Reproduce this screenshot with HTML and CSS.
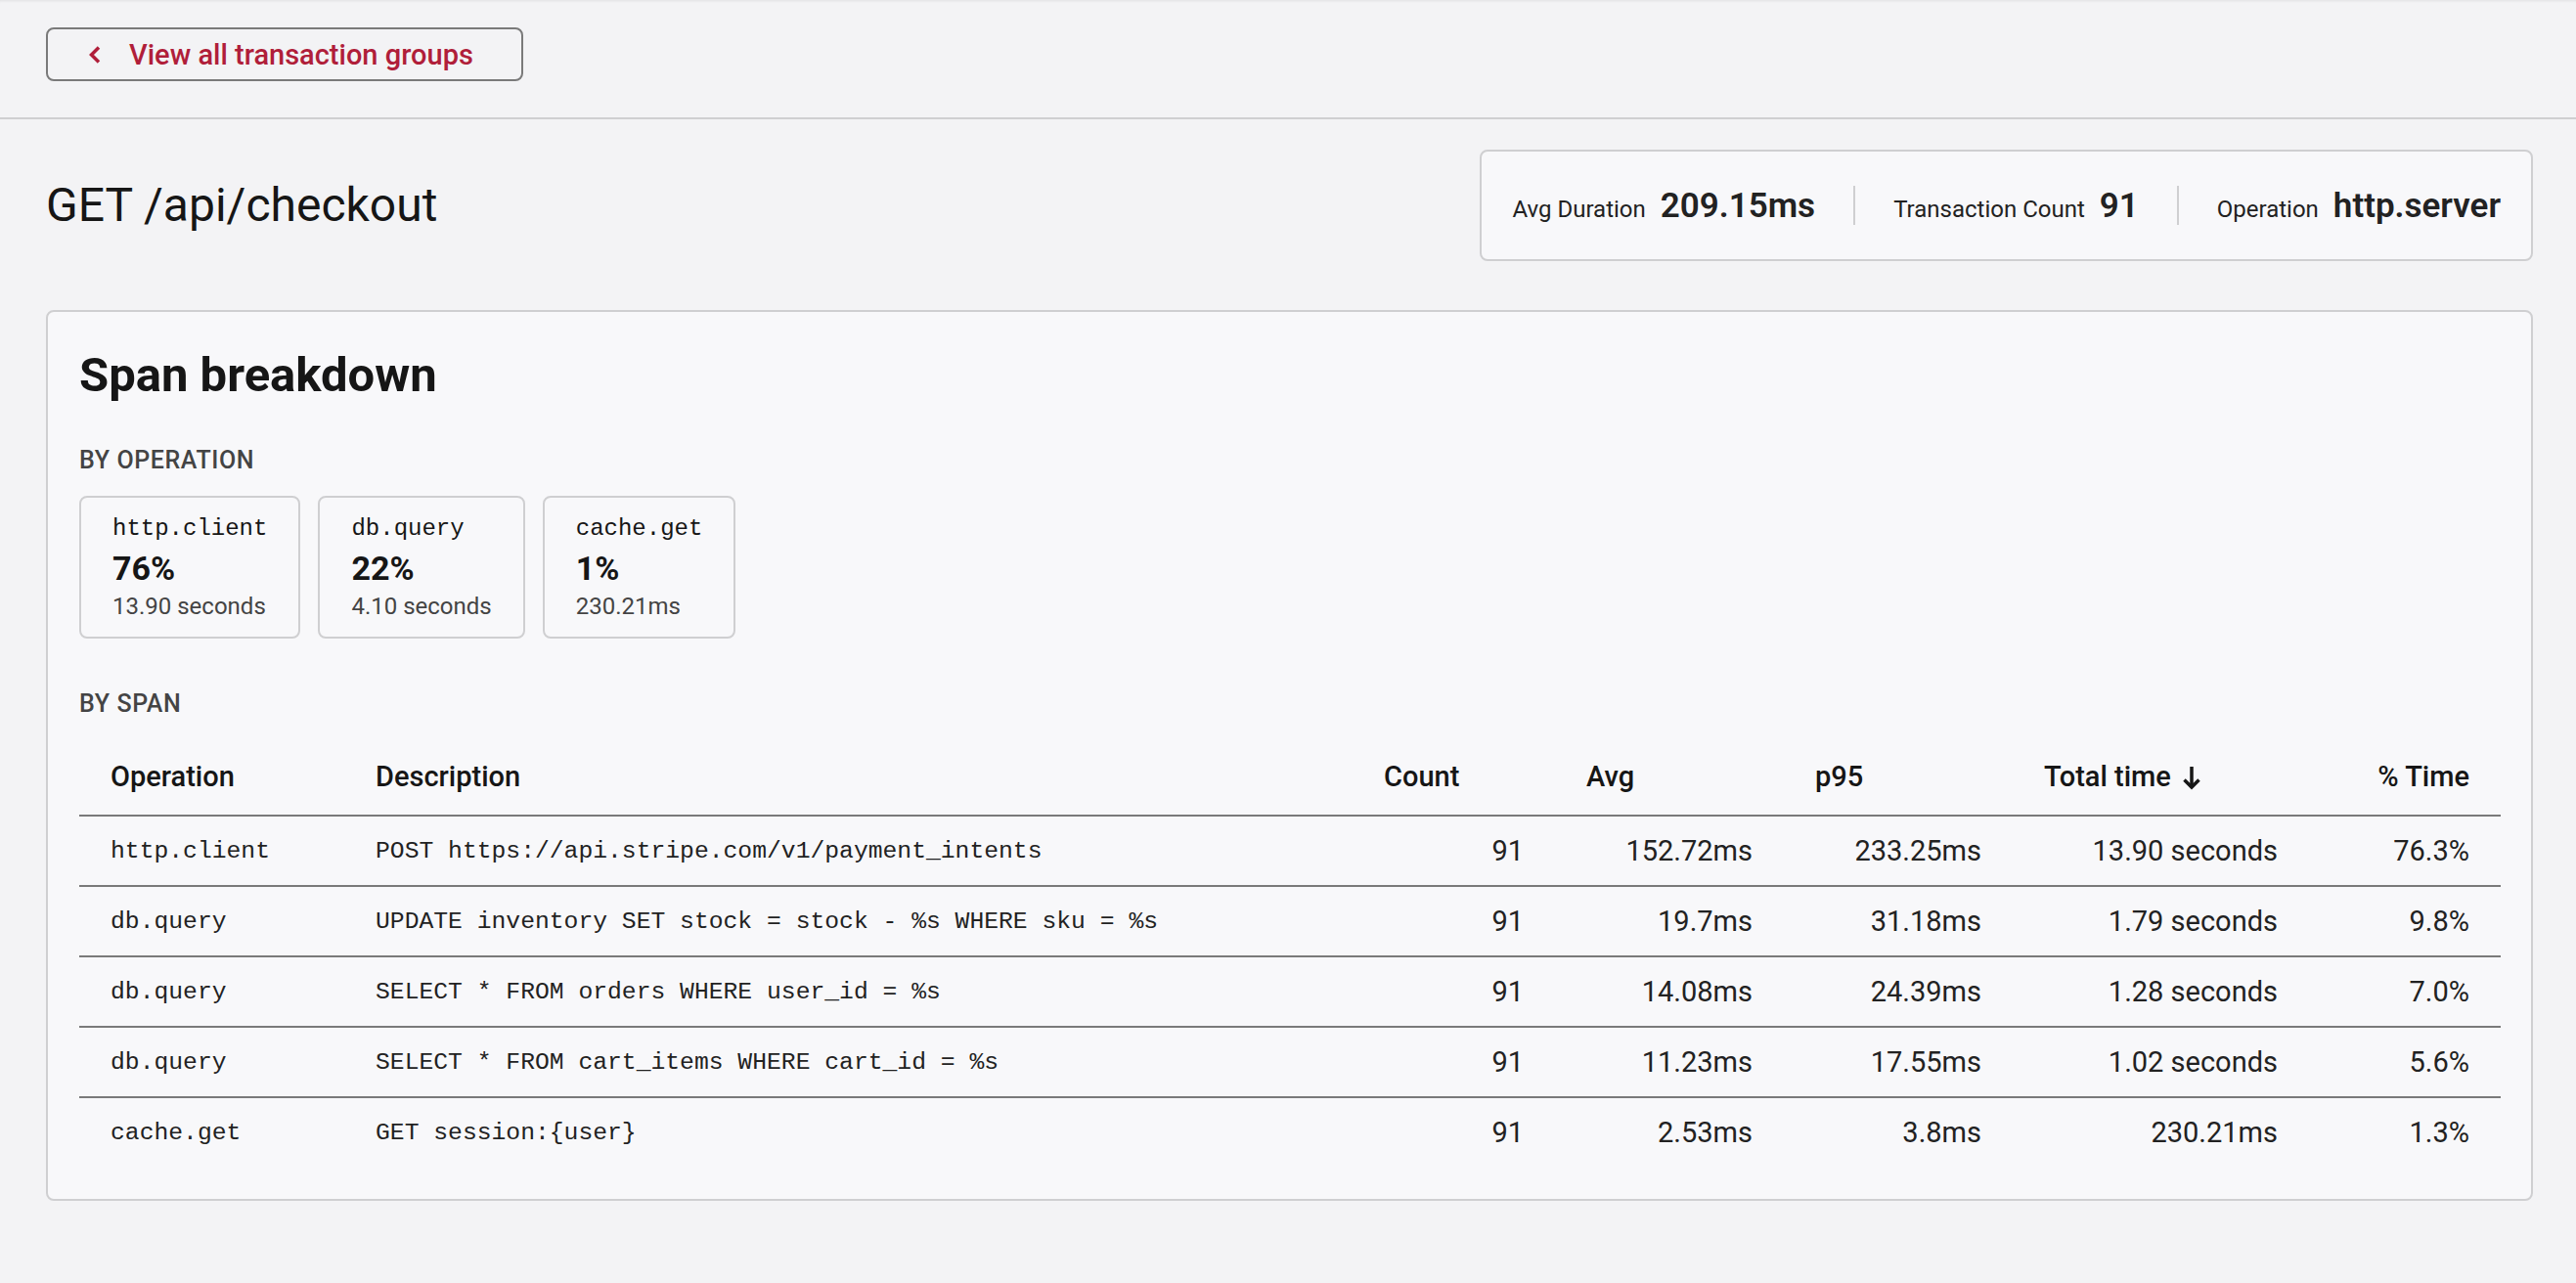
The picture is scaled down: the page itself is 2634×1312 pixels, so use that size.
FILE: index.html
```html
<!DOCTYPE html>
<html>
<head>
	<meta charset="UTF-8">
	<title>GET /api/checkout</title>
	<link rel="stylesheet" href="styles.css">
</head>
<body>
	<div class="topbar">
		<a class="back-btn" href="#">
			<svg class="chev" width="14" height="20" viewBox="0 0 14 20"><polyline points="11,2.5 3.5,10 11,17.5" fill="none" stroke="currentColor" stroke-width="3.5"/></svg>
			<span>View all transaction groups</span>
		</a>
	</div>

	<div class="page">
		<div class="title-row">
			<h1>GET /api/checkout</h1>
			<div class="stats">
				<div class="stat"><span class="stat-label">Avg Duration</span><span class="stat-value">209.15ms</span></div>
				<div class="sep"></div>
				<div class="stat"><span class="stat-label">Transaction Count</span><span class="stat-value">91</span></div>
				<div class="sep"></div>
				<div class="stat"><span class="stat-label">Operation</span><span class="stat-value">http.server</span></div>
			</div>
		</div>

		<div class="card">
			<h2>Span breakdown</h2>

			<h3 class="section-label">BY OPERATION</h3>
			<div class="op-list">
				<div class="op-card">
					<div class="op-name">http.client</div>
					<div class="op-pct">76%</div>
					<div class="op-time">13.90 seconds</div>
				</div>
				<div class="op-card">
					<div class="op-name">db.query</div>
					<div class="op-pct">22%</div>
					<div class="op-time">4.10 seconds</div>
				</div>
				<div class="op-card">
					<div class="op-name">cache.get</div>
					<div class="op-pct">1%</div>
					<div class="op-time">230.21ms</div>
				</div>
			</div>

			<h3 class="section-label by-span">BY SPAN</h3>
			<table class="span-table">
				<colgroup>
					<col style="width: 271px">
					<col style="width: 1031px">
					<col style="width: 207px">
					<col style="width: 234px">
					<col style="width: 234px">
					<col style="width: 303px">
					<col style="width: 196px">
				</colgroup>
				<thead>
					<tr>
						<th>Operation</th>
						<th>Description</th>
						<th>Count</th>
						<th>Avg</th>
						<th>p95</th>
						<th>Total time <svg class="sort-arrow" width="20" height="26" viewBox="0 0 20 26"><line x1="10" y1="2" x2="10" y2="23" stroke="currentColor" stroke-width="3.5"/><polyline points="2.5,15.5 10,23 17.5,15.5" fill="none" stroke="currentColor" stroke-width="3.5"/></svg></th>
						<th class="right">% Time</th>
					</tr>
				</thead>
				<tbody>
					<tr>
						<td class="mono">http.client</td>
						<td class="mono">POST https://api.stripe.com/v1/payment_intents</td>
						<td>91</td>
						<td>152.72ms</td>
						<td>233.25ms</td>
						<td>13.90 seconds</td>
						<td>76.3%</td>
					</tr>
					<tr>
						<td class="mono">db.query</td>
						<td class="mono">UPDATE inventory SET stock = stock - %s WHERE sku = %s</td>
						<td>91</td>
						<td>19.7ms</td>
						<td>31.18ms</td>
						<td>1.79 seconds</td>
						<td>9.8%</td>
					</tr>
					<tr>
						<td class="mono">db.query</td>
						<td class="mono">SELECT * FROM orders WHERE user_id = %s</td>
						<td>91</td>
						<td>14.08ms</td>
						<td>24.39ms</td>
						<td>1.28 seconds</td>
						<td>7.0%</td>
					</tr>
					<tr>
						<td class="mono">db.query</td>
						<td class="mono">SELECT * FROM cart_items WHERE cart_id = %s</td>
						<td>91</td>
						<td>11.23ms</td>
						<td>17.55ms</td>
						<td>1.02 seconds</td>
						<td>5.6%</td>
					</tr>
					<tr>
						<td class="mono">cache.get</td>
						<td class="mono">GET session:{user}</td>
						<td>91</td>
						<td>2.53ms</td>
						<td>3.8ms</td>
						<td>230.21ms</td>
						<td>1.3%</td>
					</tr>
				</tbody>
			</table>
		</div>
	</div>
</body>
</html>
```

FILE: styles.css
```css
body {
	margin: 0;
	background-color: #f3f3f5;
	color: #161616;
	font-family: Roboto, "Liberation Sans", sans-serif;
}
.topbar {
	box-sizing: border-box;
	height: 122px;
	padding: 28px 44px 0 47px;
	border-bottom: 2px solid #cfcfd1;
	box-shadow: inset 0 3px 3px -2px rgba(0, 0, 0, 0.08);
}
.back-btn {
	box-sizing: border-box;
	display: inline-flex;
	align-items: center;
	height: 55px;
	padding: 0 49px 0 41px;
	border: 2px solid #7a7a7a;
	border-radius: 8px;
	color: #b01e3a;
	font-size: 29px;
	font-weight: 500;
	text-decoration: none;
}
.chev {
	margin-right: 28px;
}
.page {
	padding: 0 44px 0 47px;
}
.title-row {
	display: flex;
	justify-content: space-between;
	align-items: center;
	padding-top: 31px;
}
h1 {
	margin: 0;
	font-size: 48px;
	font-weight: 400;
	line-height: 60px;
}
.stats {
	box-sizing: border-box;
	display: flex;
	align-items: center;
	height: 114px;
	padding: 0 31px;
	border: 2px solid #cfcfd1;
	border-radius: 8px;
	background-color: #f8f8fa;
}
.stat {
	display: flex;
	align-items: baseline;
	gap: 15px;
}
.stat-label {
	font-size: 24px;
	color: #222;
}
.stat-value {
	font-size: 35px;
	font-weight: 600;
	color: #222;
}
.sep {
	width: 2px;
	height: 40px;
	margin: 0 39px;
	background-color: #cfcfd1;
}
.card {
	margin-top: 50px;
	padding: 35px 32px 33px;
	border: 2px solid #cfcfd1;
	border-radius: 8px;
	background-color: #f8f8fa;
}
h2 {
	margin: 0;
	font-size: 49px;
	font-weight: 700;
	line-height: 60px;
}
.section-label {
	margin: 41.5px 0 21.5px;
	font-size: 25px;
	font-weight: 500;
	line-height: 30px;
	letter-spacing: 0.6px;
	color: #444;
}
.section-label.by-span {
	margin: 51.5px 0 24.5px;
}
.op-list {
	display: flex;
	gap: 18px;
}
.op-card {
	padding: 17px 32px;
	border: 2px solid #cfcfd1;
	border-radius: 8px;
}
.op-name {
	font-family: "Liberation Mono", "DejaVu Sans Mono", monospace;
	font-size: 24px;
	line-height: 30px;
}
.op-pct {
	font-size: 34px;
	font-weight: 700;
	line-height: 50px;
}
.op-time {
	font-size: 24px;
	line-height: 28px;
	color: #444;
}
.span-table {
	width: 100%;
	border-collapse: collapse;
	table-layout: fixed;
}
.span-table th {
	padding: 20px 32px 23.7px;
	font-size: 29px;
	font-weight: 500;
	line-height: 30px;
	text-align: left;
	white-space: nowrap;
	border-bottom: 2px solid #7a7a7a;
}
.span-table th.right {
	text-align: right;
}
.sort-arrow {
	vertical-align: -4px;
	margin-left: 4px;
}
.span-table td {
	padding: 20px 32px;
	font-size: 29px;
	line-height: 30px;
	text-align: right;
	white-space: nowrap;
	color: #222;
	border-bottom: 2px solid #7a7a7a;
}
.span-table td.mono {
	font-family: "Liberation Mono", "DejaVu Sans Mono", monospace;
	font-size: 24.7px;
	text-align: left;
}
.span-table tbody tr:last-child td {
	border-bottom: none;
}
```
